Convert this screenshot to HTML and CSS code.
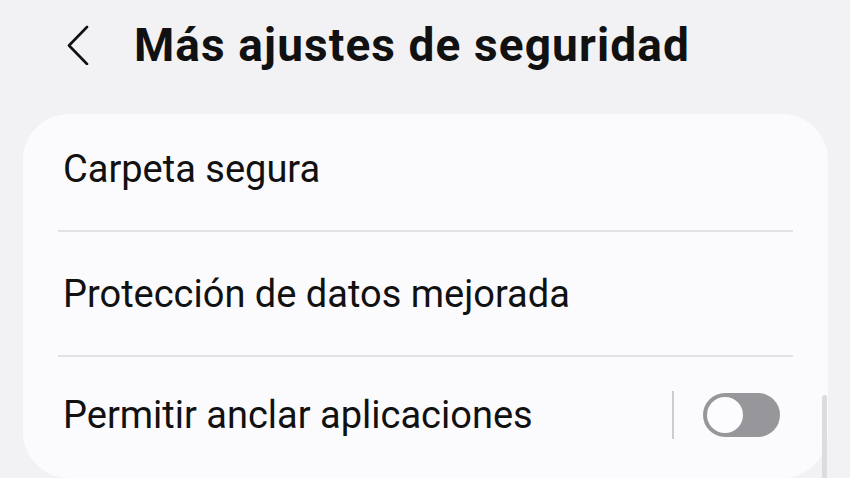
FILE: index.html
```html
<!DOCTYPE html>
<html lang="es">
<head>
<meta charset="utf-8">
<title>Más ajustes de seguridad</title>
<link rel="stylesheet" href="styles.css">
</head>
<body>
<div class="screen">
  <header class="header">
    <button class="back" aria-label="Atrás">
      <svg width="24" height="40" viewBox="0 0 24 40"><path d="M21 2 L3 20.5 L21 39" fill="none" stroke="#111" stroke-width="2.6" stroke-linecap="round" stroke-linejoin="round"/></svg>
    </button>
    <h1 class="title">Más ajustes de seguridad</h1>
  </header>
  <section class="card">
    <div class="row first"><span class="label">Carpeta segura</span></div>
    <div class="divider"></div>
    <div class="row mid"><span class="label">Protección de datos mejorada</span></div>
    <div class="divider"></div>
    <div class="row">
      <span class="label">Permitir anclar aplicaciones</span>
      <div class="ctrl">
        <span class="vsep"></span>
        <span class="toggle"><span class="knob"></span></span>
      </div>
    </div>
  </section>
  <div class="scrollbar"></div>
</div>
</body>
</html>
```
FILE: styles.css
```css
html, body {
  margin: 0;
  padding: 0;
}
body {
  background: #f2f2f4;
  font-family: Roboto, "Liberation Sans", sans-serif;
  color: #111;
  overflow: hidden;
}
.screen {
  position: relative;
  width: 850px;
  height: 478px;
  overflow: hidden;
}
.header {
  height: 114px;
  display: flex;
  align-items: center;
  padding-left: 66px;
  box-sizing: border-box;
  padding-bottom: 24px;
}
.back {
  background: none;
  border: 0;
  padding: 0;
  margin: 0;
  width: 24px;
  height: 40px;
  display: flex;
}
.title {
  margin: 0 0 0 44px;
  font-size: 46px;
  font-weight: 700;
  letter-spacing: 1.1px;
  line-height: 1;
}
.card {
  margin: 0 22px 0 23px;
  background: #fbfbfd;
  border-radius: 46px;
  height: 364px;
  padding: 0 35px;
  box-sizing: border-box;
}
.row {
  height: 116px;
  display: flex;
  align-items: center;
  justify-content: space-between;
  padding-left: 5px;
  box-sizing: border-box;
}
.row.first {
  padding-bottom: 6px;
}
.row.mid {
  height: 123px;
}
.label {
  font-size: 38px;
  font-weight: 400;
}
.divider {
  height: 2px;
  background: #e3e3e6;
}
.ctrl {
  display: flex;
  align-items: center;
  gap: 29px;
  margin-right: 13px;
}
.vsep {
  width: 2px;
  height: 48px;
  background: #cdcdd1;
}
.toggle {
  width: 77px;
  height: 44px;
  border-radius: 22px;
  background: #97969b;
  display: flex;
  align-items: center;
  padding-left: 4px;
  box-sizing: border-box;
}
.knob {
  width: 36px;
  height: 36px;
  border-radius: 50%;
  background: #fcfcfe;
}
.scrollbar {
  position: absolute;
  left: 822px;
  top: 395px;
  width: 5px;
  height: 90px;
  border-radius: 3px;
  background: #dcdcdf;
}
```
